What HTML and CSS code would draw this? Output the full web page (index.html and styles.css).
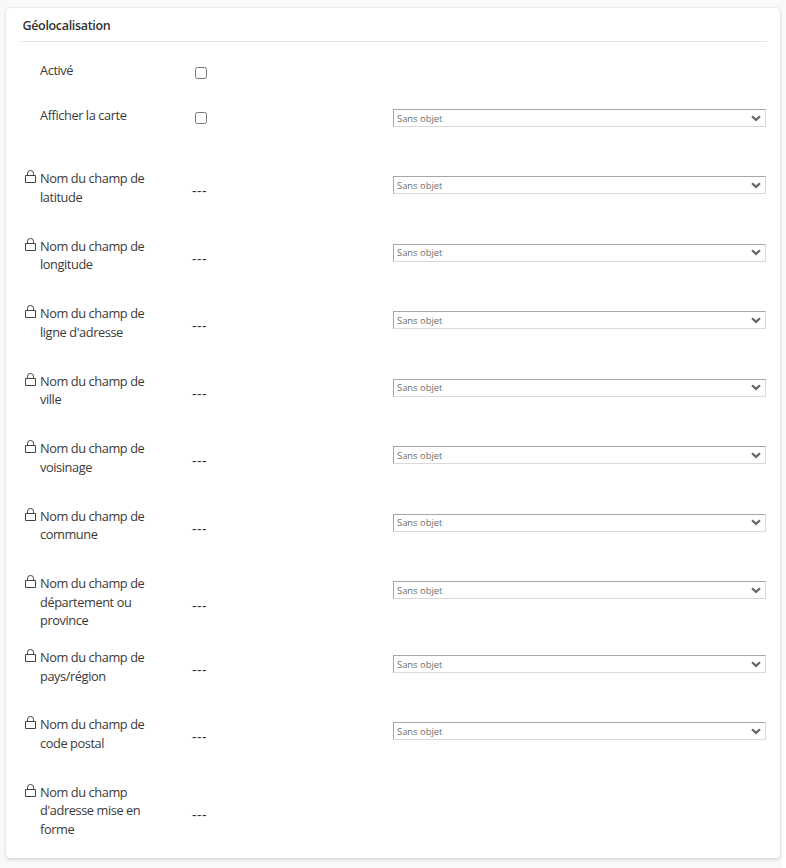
FILE: index.html
```
<!DOCTYPE html>
<html lang="fr">
<head>
  <meta charset="UTF-8">
  <meta name="viewport" content="width=device-width, initial-scale=1.0">
  <title>Géolocalisation</title>
  <link rel="stylesheet" href="styles.css">
</head>
<body>
  <section class="card">
    <h2>Géolocalisation</h2>
    <form id="fields">
      <div class="row check-row">
        <label for="active">Activé</label>
        <input type="checkbox" id="active">
      </div>
      <div class="row check-row last-check">
        <label for="carte">Afficher la carte</label>
        <input type="checkbox" id="carte">
        <div class="select"><select><option>Sans objet</option></select><svg viewBox="0 0 10 7"><path d="M1 1.2 L5 4.9 L9 1.2"/></svg></div>
      </div>
    </form>
  </section>
  <div class="page-edge"></div>

  <script>
    // Champs verrouillés, height = hauteur de la ligne
    const fields = [
      { lines: ["Nom du champ de", "latitude"], height: 67.5 },
      { lines: ["Nom du champ de", "longitude"], height: 67.5 },
      { lines: ["Nom du champ de", "ligne d'adresse"], height: 67.5 },
      { lines: ["Nom du champ de", "ville"], height: 67.5 },
      { lines: ["Nom du champ de", "voisinage"], height: 67.5 },
      { lines: ["Nom du champ de", "commune"], height: 67.5 },
      { lines: ["Nom du champ de", "département ou", "province"], height: 74 },
      { lines: ["Nom du champ de", "pays/région"], height: 67 },
      { lines: ["Nom du champ de", "code postal"], height: 67.5 },
      { lines: ["Nom du champ", "d'adresse mise en", "forme"], height: 74, noSelect: true }
    ];

    const lock = `<svg class="lock" viewBox="0 0 11 14"><path d="M0.5 5.5 H10.5 V12.5 H0.5 Z M2.5 5.5 V3.2 A3 2.7 0 0 1 8.5 3.2 V5.5"/></svg>`;
    const select = document.querySelector(".select").outerHTML;
    const form = document.getElementById("fields");

    fields.forEach(field => {
      const tall = field.lines.length > 2 ? " tall" : "";
      form.insertAdjacentHTML("beforeend", `
        <div class="row locked${tall}" style="height: ${field.height}px">
          ${lock}
          <label>${field.lines.join("<br>")}</label>
          <span class="value">---</span>
          ${field.noSelect ? "" : select}
        </div>`);
    });
  </script>
</body>
</html>

```
FILE: styles.css
```
body {
  display: grid;
  grid-template-columns: 774px 6px;
  box-sizing: border-box;
  height: 868px;
  margin: 0;
  padding: 8px 0 10px 6px;
  overflow: hidden;
  font-family: "Open Sans", "Noto Sans", sans-serif;
  font-size: 13px;
  line-height: 18.6px;
  color: #323130;
  background: #faf9f8;
}
.card {
  box-sizing: border-box;
  height: 850px;
  padding: 0 13px 0 15px;
  background: #fff;
  border-radius: 4px;
  box-shadow: 0 1.6px 3.6px rgba(0, 0, 0, 0.13), 0 0 2px rgba(0, 0, 0, 0.11);
}
h2 {
  height: 33px;
  margin: 0 0 19px;
  padding-left: 1.5px;
  border-bottom: 1px solid #e5e5e5;
  font-size: 12.5px;
  font-weight: 600;
  line-height: 35px;
  letter-spacing: -0.33px;
}
.row {
  display: grid;
  grid-template-columns: 19px 152px 201px 373px;
  align-items: start;
}
.row label {
  grid-column: 2;
  font-size: 12.8px;
  letter-spacing: -0.42px;
  white-space: nowrap;
  color: #3b3a39;
}
.check-row {
  height: 45px;
}
.last-check {
  height: 63px;
}
.row input {
  width: 12px;
  height: 12px;
  margin: 6px 0 0 3px;
}
.lock {
  grid-column: 1;
  width: 11px;
  height: 14px;
  margin: 1px 0 0 4px;
}
.lock path {
  fill: none;
  stroke: #444;
  stroke-width: 1;
}
.value {
  margin-top: 13px;
  font-size: 14px;
  letter-spacing: 0.5px;
}
.tall .value {
  margin-top: 23px;
}
.select {
  display: flex;
  align-items: center;
  grid-column: 4;
  box-sizing: border-box;
  height: 18px;
  margin-top: 3px;
  padding-right: 4px;
  border: 1px solid;
  border-color: #a6a6a6 #d9d9d9 #d9d9d9 #a6a6a6;
}
.locked .select {
  margin-top: 7px;
}
.select select {
  flex: 1;
  height: 16px;
  padding: 0 0 0 3px;
  border: 0;
  appearance: none;
  background: none;
  font-family: "Open Sans", sans-serif;
  font-size: 9.4px;
  color: #6e6e6e;
}
.select svg {
  width: 10px;
  height: 7px;
}
.select path {
  fill: none;
  stroke: #666;
  stroke-width: 2.2;
}
/* white area to the right of the page background */
.page-edge {
  justify-self: end;
  width: 4px;
  height: 200px;
  margin: 672px 0 0;
  background: #fff;
}

```
